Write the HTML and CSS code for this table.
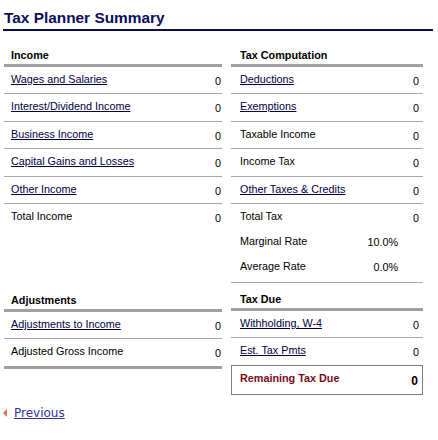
FILE: index.html
```html
<!DOCTYPE html>
<html>
<head>
<meta charset="utf-8">
<link rel="stylesheet" href="styles.css">
</head>
<body>
<div class="page">
  <h1 class="title">Tax Planner Summary</h1>
  <div class="grid">
    <section class="sec sec-left">
      <div class="head">Income</div>
      <div class="row line"><a href="#" class="lbl">Wages and Salaries</a><span class="val">0</span></div>
      <div class="row line"><a href="#" class="lbl">Interest/Dividend Income</a><span class="val">0</span></div>
      <div class="row line"><a href="#" class="lbl">Business Income</a><span class="val">0</span></div>
      <div class="row line"><a href="#" class="lbl">Capital Gains and Losses</a><span class="val">0</span></div>
      <div class="row line"><a href="#" class="lbl">Other Income</a><span class="val">0</span></div>
      <div class="row"><span class="lbl">Total Income</span><span class="val">0</span></div>
    </section>
    <section class="sec sec-right top-right">
      <div class="head">Tax Computation</div>
      <div class="row line"><a href="#" class="lbl">Deductions</a><span class="val">0</span></div>
      <div class="row line"><a href="#" class="lbl">Exemptions</a><span class="val">0</span></div>
      <div class="row line"><span class="lbl">Taxable Income</span><span class="val">0</span></div>
      <div class="row line"><span class="lbl">Income Tax</span><span class="val">0</span></div>
      <div class="row line"><a href="#" class="lbl">Other Taxes &amp; Credits</a><span class="val">0</span></div>
      <div class="row short"><span class="lbl">Total Tax</span><span class="val">0</span></div>
      <div class="row short"><span class="lbl">Marginal Rate</span><span class="val rate">10.0%</span></div>
      <div class="row short"><span class="lbl">Average Rate</span><span class="val rate">0.0%</span></div>
    </section>
    <section class="sec sec-left bottom-left">
      <div class="head">Adjustments</div>
      <div class="row line"><a href="#" class="lbl">Adjustments to Income</a><span class="val">0</span></div>
      <div class="row"><span class="lbl">Adjusted Gross Income</span><span class="val">0</span></div>
    </section>
    <section class="sec sec-right bottom-right">
      <div class="head">Tax Due</div>
      <div class="row line"><a href="#" class="lbl">Withholding, W-4</a><span class="val">0</span></div>
      <div class="row"><a href="#" class="lbl">Est. Tax Pmts</a><span class="val">0</span></div>
      <div class="due"><span class="due-lbl">Remaining Tax Due</span><span class="due-val">0</span></div>
    </section>
  </div>
  <div class="nav"><span class="arrow"></span><a href="#" class="prev">Previous</a></div>
</div>
</body>
</html>
```
FILE: styles.css
```css
html, body {
  margin: 0;
  padding: 0;
  background: #ffffff;
}
body {
  font-family: "Liberation Sans", Arial, sans-serif;
  font-size: 10.8px;
  color: #000000;
}
.page {
  padding-left: 3px;
  width: 430px;
}
.title {
  margin: 9px 0 0 0;
  padding: 0 0 2px 1px;
  font-size: 15.4px;
  line-height: 18px;
  font-weight: bold;
  color: #0c0c5a;
  border-bottom: 2px solid #0c0c4a;
}
.grid {
  display: grid;
  grid-template-columns: 218px 192px;
  column-gap: 9px;
  margin-top: 17px;
  margin-left: 1px;
}
.head {
  font-weight: bold;
  line-height: 14px;
  padding-bottom: 2px;
  border-bottom: 3px solid #a0a0a0;
}
.sec-left .head,
.sec-left .row { padding-left: 7px; }
.sec-left .row { padding-right: 1px; }
.sec-right .head,
.sec-right .row { padding-left: 9px; }
.sec-right .row { padding-right: 4px; }
.row {
  display: flex;
  justify-content: space-between;
  height: 26.4px;
  line-height: 14px;
}
.row.line {
  border-bottom: 1px solid #a8a8a8;
}
.row.short {
  height: 25px;
}
.lbl {
  padding-top: 5px;
  color: #000000;
}
a.lbl {
  color: #000040;
  text-decoration: underline;
}
.val {
  padding-top: 7px;
}
.val.rate {
  padding-top: 6px;
  margin-right: 21px;
}
.top-right {
  border-bottom: 1px solid #a8a8a8;
  padding-bottom: 3px;
}
.bottom-left {
  align-self: start;
}
.bottom-left .head {
  margin-top: 10px;
}
.bottom-right .head {
  margin-top: 9px;
}
.bottom-left .row:last-child {
  border-bottom: 3px solid #a0a0a0;
}
.due {
  display: flex;
  justify-content: space-between;
  align-items: center;
  height: 28px;
  border: 1px solid #808080;
  padding: 0 4px 0 8px;
}
.due-lbl {
  font-weight: bold;
  color: #7a0a1c;
  margin-top: -3px;
}
.due-val {
  font-weight: bold;
  font-size: 12px;
  margin-top: 3px;
}
.nav {
  display: flex;
  align-items: center;
  margin-top: 10px;
  height: 16px;
}
.arrow {
  width: 0;
  height: 0;
  border-top: 4px solid transparent;
  border-bottom: 4px solid transparent;
  border-right: 4px solid #d9773a;
  margin-right: 7px;
}
.prev {
  font-family: "DejaVu Sans", Verdana, sans-serif;
  font-size: 12px;
  color: #333399;
  text-decoration: underline;
}
```
